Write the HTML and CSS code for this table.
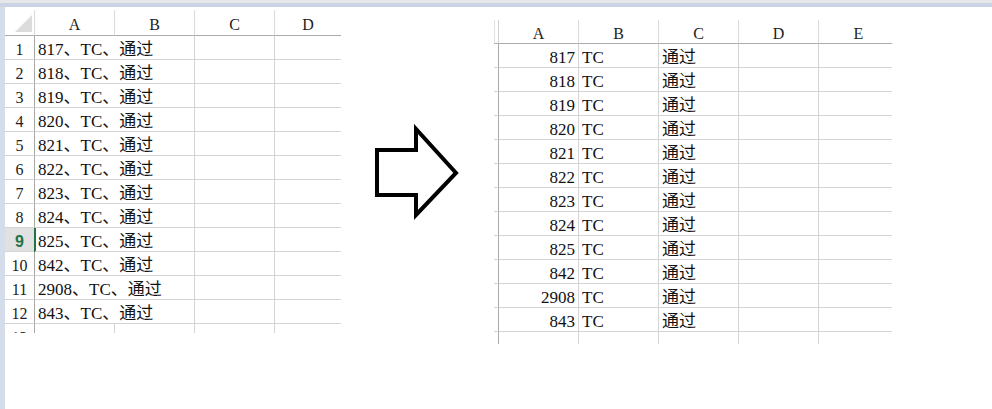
FILE: index.html
```html
<!DOCTYPE html>
<html lang="zh">
<head>
<meta charset="utf-8">
<title>Sheet</title>
<link rel="stylesheet" href="styles.css">
</head>
<body>
<div class="topbar"></div>
<div class="main">
  <div class="strip"></div>

  <div class="sheet left">
    <div class="corner"><span class="tri"></span></div>
    <div class="ch">A</div><div class="ch">B</div><div class="ch">C</div><div class="ch last">D</div>

    <div class="rh">1</div><div class="c span2">817、TC、通过</div><div class="c"></div><div class="c"></div>
    <div class="rh">2</div><div class="c span2">818、TC、通过</div><div class="c"></div><div class="c"></div>
    <div class="rh">3</div><div class="c span2">819、TC、通过</div><div class="c"></div><div class="c"></div>
    <div class="rh">4</div><div class="c span2">820、TC、通过</div><div class="c"></div><div class="c"></div>
    <div class="rh">5</div><div class="c span2">821、TC、通过</div><div class="c"></div><div class="c"></div>
    <div class="rh">6</div><div class="c span2">822、TC、通过</div><div class="c"></div><div class="c"></div>
    <div class="rh">7</div><div class="c span2">823、TC、通过</div><div class="c"></div><div class="c"></div>
    <div class="rh">8</div><div class="c span2">824、TC、通过</div><div class="c"></div><div class="c"></div>
    <div class="rh active">9</div><div class="c span2 selected">825、TC、通过</div><div class="c"></div><div class="c"></div>
    <div class="rh">10</div><div class="c span2">842、TC、通过</div><div class="c"></div><div class="c"></div>
    <div class="rh">11</div><div class="c span2">2908、TC、通过</div><div class="c"></div><div class="c"></div>
    <div class="rh">12</div><div class="c span2">843、TC、通过</div><div class="c"></div><div class="c"></div>
    <div class="rh">13</div><div class="c"></div><div class="c"></div><div class="c"></div><div class="c"></div>
  </div>

  <svg class="arrow" width="88" height="98" viewBox="0 0 88 98">
    <polygon points="4,26 43,26 43,5 83,49 43,91 43,71 4,71" fill="#fff" stroke="#000" stroke-width="4" stroke-linejoin="miter"/>
  </svg>

  <div class="sheet right">
    <div class="stub head"></div>
    <div class="ch">A</div><div class="ch">B</div><div class="ch">C</div><div class="ch">D</div><div class="ch">E</div>

    <div class="stub"></div><div class="c num">817</div><div class="c txt">TC</div><div class="c txt">通过</div><div class="c"></div><div class="c"></div>
    <div class="stub"></div><div class="c num">818</div><div class="c txt">TC</div><div class="c txt">通过</div><div class="c"></div><div class="c"></div>
    <div class="stub"></div><div class="c num">819</div><div class="c txt">TC</div><div class="c txt">通过</div><div class="c"></div><div class="c"></div>
    <div class="stub"></div><div class="c num">820</div><div class="c txt">TC</div><div class="c txt">通过</div><div class="c"></div><div class="c"></div>
    <div class="stub"></div><div class="c num">821</div><div class="c txt">TC</div><div class="c txt">通过</div><div class="c"></div><div class="c"></div>
    <div class="stub"></div><div class="c num">822</div><div class="c txt">TC</div><div class="c txt">通过</div><div class="c"></div><div class="c"></div>
    <div class="stub"></div><div class="c num">823</div><div class="c txt">TC</div><div class="c txt">通过</div><div class="c"></div><div class="c"></div>
    <div class="stub"></div><div class="c num">824</div><div class="c txt">TC</div><div class="c txt">通过</div><div class="c"></div><div class="c"></div>
    <div class="stub"></div><div class="c num">825</div><div class="c txt">TC</div><div class="c txt">通过</div><div class="c"></div><div class="c"></div>
    <div class="stub"></div><div class="c num">842</div><div class="c txt">TC</div><div class="c txt">通过</div><div class="c"></div><div class="c"></div>
    <div class="stub"></div><div class="c num">2908</div><div class="c txt">TC</div><div class="c txt">通过</div><div class="c"></div><div class="c"></div>
    <div class="stub"></div><div class="c num">843</div><div class="c txt">TC</div><div class="c txt">通过</div><div class="c"></div><div class="c"></div>
    <div class="stub"></div><div class="c"></div><div class="c"></div><div class="c"></div><div class="c"></div><div class="c"></div>
  </div>
</div>
</body>
</html>
```

FILE: styles.css
```css
* { box-sizing: border-box; }

html, body {
  margin: 0;
  padding: 0;
  background: #ffffff;
}

body {
  width: 992px;
  height: 409px;
  overflow: hidden;
  font-family: "Liberation Serif", "Noto Sans CJK SC", serif;
  color: #111;
}

.topbar {
  height: 7px;
  border-top: 3px solid #e6e7e9;
  background: #c9d3e3;
}

.main {
  display: flex;
  align-items: flex-start;
  height: 402px;
}

.strip {
  width: 5px;
  align-self: stretch;
  background: #d5dcea;
}

.sheet {
  display: grid;
  overflow: hidden;
  grid-auto-rows: 24px;
}

.sheet.left {
  margin-top: 3px;
  width: 336px;
  height: 323px;
  grid-template-columns: 30px 80px 80px 80px 67px;
  grid-template-rows: 26px;
}

.sheet.right {
  margin-left: 33px;
  margin-top: 13px;
  width: 398px;
  height: 324px;
  grid-template-columns: 5px 80px 80px 80px 80px 80px;
  grid-template-rows: 24px;
}

.ch {
  font-size: 16px;
  line-height: 20px;
  padding-top: 4px;
  text-align: center;
  color: #222;
  border-right: 1px solid #dadada;
  border-bottom: 1px solid #ababab;
}

.sheet.left .ch {
  padding-top: 5px;
}

.corner {
  position: relative;
  border-right: 1px solid #dadada;
  border-bottom: 1px solid #ababab;
}

.corner .tri {
  position: absolute;
  right: 2px;
  bottom: 3px;
  width: 0;
  height: 0;
  border-left: 17px solid transparent;
  border-bottom: 17px solid #dcdcdc;
}

.rh {
  font-size: 16px;
  line-height: 21px;
  padding-top: 3px;
  text-align: center;
  color: #222;
  border-right: 1px solid #a9a9a9;
  border-bottom: 1px solid #d4d4d4;
}

.rh.active {
  background: #e1e1e1;
  color: #217346;
  font-weight: bold;
  font-family: "Liberation Sans", sans-serif;
}

.c {
  font-size: 17px;
  line-height: 21px;
  padding-top: 3px;
  white-space: nowrap;
  overflow: hidden;
  border-right: 1px solid #d4d4d4;
  border-bottom: 1px solid #d4d4d4;
}

.c.span2 {
  grid-column: span 2;
  padding-left: 3px;
}

.c.selected {
  box-shadow: -1px 0 0 #217346, inset 1px 0 0 #217346;
}

.stub {
  border-right: 1px solid #a9a9a9;
  border-bottom: 1px solid #d4d4d4;
}

.stub.head {
  border-left: 1px solid #e2e2e2;
  border-right-color: #cfcfcf;
  border-bottom-color: #ababab;
}

.c.num {
  text-align: right;
  padding-right: 3px;
}

.c.txt {
  padding-left: 3px;
}

.arrow {
  display: block;
  margin-left: 32px;
  margin-top: 117px;
  flex: none;
}
```
